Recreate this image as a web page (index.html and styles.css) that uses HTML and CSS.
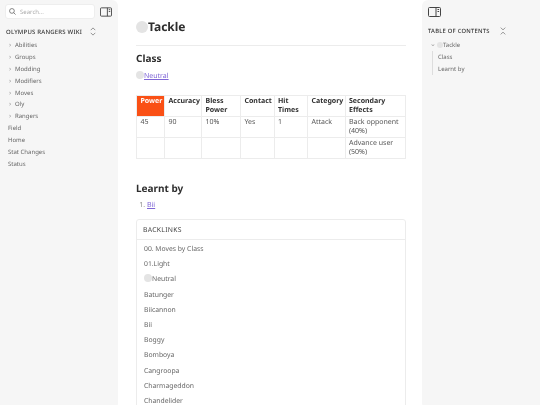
FILE: index.html
```html
<!DOCTYPE html>
<html lang="en">
<head>
<meta charset="utf-8">
<title>Tackle</title>
<link rel="stylesheet" href="styles.css">
</head>
<body>
<div class="layout">
  <aside class="left">
    <div class="search-row">
      <div class="search">
        <svg class="search-icon" viewBox="0 0 10 10" width="7" height="7"><circle cx="4.2" cy="4.2" r="3.4"/><path d="M6.6 6.6 9.4 9.4"/></svg>
        <span>Search...</span>
      </div>
      <svg class="panel-icon" viewBox="0 0 13 10" width="12" height="10"><rect x=".5" y=".5" width="12" height="9" rx="1"/><path d="M8 .5v9M9.5 2.5h1.6M9.5 4.5h1.6"/></svg>
    </div>
    <div class="wiki-row">
      <span class="wiki-title">OLYMPUS RANGERS WIKI</span>
      <svg class="updown" viewBox="0 0 8 12" width="6" height="9"><path d="M1 4.2 4 1.2 7 4.2M1 7.8 4 10.8 7 7.8"/></svg>
    </div>
    <nav class="tree">
      <div class="tree-item"><span class="chev">›</span>Abilities</div>
      <div class="tree-item"><span class="chev">›</span>Groups</div>
      <div class="tree-item"><span class="chev">›</span>Modding</div>
      <div class="tree-item"><span class="chev">›</span>Modifiers</div>
      <div class="tree-item"><span class="chev">›</span>Moves</div>
      <div class="tree-item"><span class="chev">›</span>Oly</div>
      <div class="tree-item"><span class="chev">›</span>Rangers</div>
      <div class="tree-leaf">Field</div>
      <div class="tree-leaf">Home</div>
      <div class="tree-leaf">Stat Changes</div>
      <div class="tree-leaf">Status</div>
    </nav>
  </aside>
  <main class="main">
    <h1 class="title"><span class="ball ball-lg"></span>Tackle</h1>
    <hr class="rule">
    <h2 class="heading">Class</h2>
    <p class="para"><a class="link" href="#"><span class="ball ball-sm"></span>Neutral</a></p>
    <table class="moves">
      <colgroup>
        <col class="c1"><col class="c2"><col class="c3"><col class="c4"><col class="c5"><col class="c6"><col>
      </colgroup>
      <thead>
        <tr><th class="hot">Power</th><th>Accuracy</th><th>Bless Power</th><th>Contact</th><th>Hit Times</th><th>Category</th><th>Secondary Effects</th></tr>
      </thead>
      <tbody>
        <tr><td>45</td><td>90</td><td>10%</td><td>Yes</td><td>1</td><td>Attack</td><td>Back opponent (40%)</td></tr>
        <tr><td></td><td></td><td></td><td></td><td></td><td></td><td>Advance user (50%)</td></tr>
      </tbody>
    </table>
    <h2 class="heading learnt">Learnt by</h2>
    <ol class="learnt-list"><li><a class="link" href="#">Bii</a></li></ol>
    <section class="backlinks">
      <div class="backlinks-head">BACKLINKS</div>
      <ul class="backlinks-list">
        <li>00. Moves by Class</li>
        <li>01.Light</li>
        <li><span class="ball ball-sm"></span>Neutral</li>
        <li>Batunger</li>
        <li>Biicannon</li>
        <li>Bii</li>
        <li>Boggy</li>
        <li>Bomboya</li>
        <li>Cangroopa</li>
        <li>Charmageddon</li>
        <li>Chandelider</li>
      </ul>
    </section>
  </main>
  <aside class="right">
    <svg class="panel-icon" viewBox="0 0 13 10" width="13" height="10"><rect x=".5" y=".5" width="12" height="9" rx="1"/><path d="M8 .5v9M9.5 2.5h1.6M9.5 4.5h1.6"/></svg>
    <div class="toc-row">
      <span class="toc-title">TABLE OF CONTENTS</span>
      <svg class="updown" viewBox="0 0 8 10" width="6" height="8"><path d="M1 .5 4 3.5 7 .5M1 9.5 4 6.5 7 9.5"/></svg>
    </div>
    <div class="toc-top"><span class="chev-down">⌄</span><span class="ball ball-xs"></span>Tackle</div>
    <div class="toc-sub">
      <div>Class</div>
      <div>Learnt by</div>
    </div>
  </aside>
</div>
</body>
</html>
```
FILE: styles.css
```css
* { box-sizing: border-box; }
html, body { margin: 0; height: 100%; }
html { text-rendering: geometricPrecision; }
body {
  font-family: "Noto Sans", sans-serif;
  color: #4a4a4a;
  background: #fff;
  overflow: hidden;
}
.layout {
  display: grid;
  grid-template-columns: 118px 1fr 118px;
  width: 540px;
  height: 405px;
  overflow: hidden;
  will-change: transform;
}
.left, .right { background: #f6f6f6; }
.left { padding: 4px 5px 0; border-radius: 0 6px 6px 0; }
.search-row { display: flex; align-items: center; justify-content: space-between; }
.search {
  width: 90px;
  height: 15px;
  background: #fff;
  border-radius: 3px;
  border: 1px solid #eee;
  display: flex;
  align-items: center;
  gap: 4px;
  padding-left: 3px;
  font-size: 6px;
  color: #aaa;
}
.search-icon { fill: none; stroke: #555; stroke-width: 1; }
.panel-icon { fill: none; stroke: #444; stroke-width: 1; display: block; }
.search-row .panel-icon { margin-right: 1px; }
.wiki-row { display: flex; align-items: center; margin: 7px 0 0 1px; height: 11px; }
.wiki-title { width: 76px; font-size: 6px; font-weight: 500; color: #333; letter-spacing: .2px; white-space: nowrap; }
.updown { fill: none; stroke: #666; stroke-width: .9; flex: none; }
.wiki-row .updown { margin-left: 8px; }
.tree { margin-top: 3px; font-size: 6px; color: #666; }
.tree-item, .tree-leaf { height: 11.9px; line-height: 11.9px; white-space: nowrap; }
.tree-leaf { padding-left: 3px; }
.tree-item { padding-left: 4px; }
.chev { display: inline-block; width: 6px; color: #999; font-size: 7px; }
.main { padding: 18px 16px 0 18px; min-width: 0; }
.title { margin: 0; font-size: 12px; line-height: 17px; font-weight: 700; color: #2e2e2e; display: flex; align-items: center; }
.ball { display: inline-block; border-radius: 50%; background: #e4e4e4; vertical-align: -1px; flex: none; }
.ball-lg { width: 12px; height: 12px; }
.ball-sm { width: 8px; height: 8px; }
.ball-xs { width: 6px; height: 6px; }
.rule { border: 0; border-top: 1px solid #ececec; margin: 10px 0 0; }
.heading { margin: 5px 0 0; font-size: 10px; line-height: 15px; font-weight: 700; color: #2e2e2e; }
.para { margin: 5px 0 0; font-size: 7px; line-height: 11px; }
.link { color: #7f66d6; text-decoration: underline; }
.moves { border-collapse: collapse; width: 270px; margin-top: 13px; table-layout: fixed; font-size: 7px; line-height: 8.5px; }
.moves th, .moves td { border: 1px solid #ececec; padding: 2px 3px 1px 3.5px; text-align: left; vertical-align: top; }
.moves th { font-weight: 700; color: #2e2e2e; height: 21px; }
.moves td { height: 21px; color: #555; }
.moves .hot { background: #fa5015; color: #fff; }
.c1 { width: 28px; } .c2 { width: 37px; } .c3 { width: 39px; } .c4 { width: 33.5px; } .c5 { width: 33.5px; } .c6 { width: 37.5px; }
.heading.learnt { margin-top: 22px; }
.learnt-list { margin: 4px 0 0; padding: 0 0 0 11px; font-size: 7px; line-height: 11px; color: #888; }
.backlinks { margin-top: 8px; border: 1px solid #ececec; border-radius: 3px; }
.backlinks-head { height: 20px; line-height: 19px; padding-left: 6px; font-size: 6.8px; letter-spacing: .3px; color: #444; border-bottom: 1px solid #ececec; }
.backlinks-list { list-style: none; margin: 0; padding: 1px 0 0 7px; font-size: 6.8px; color: #666; }
.backlinks-list li { height: 15.2px; line-height: 15.2px; }
.right { padding: 7px 5px 0 6px; border-radius: 6px 0 0 6px; }
.toc-row { display: flex; align-items: center; margin-top: 8px; height: 11px; }
.toc-title { width: 65px; font-size: 5.8px; font-weight: 500; color: #333; letter-spacing: .25px; white-space: nowrap; }
.toc-row .updown { margin-left: 7px; }
.toc-top { margin-top: 3px; font-size: 6px; color: #666; line-height: 12px; padding-left: 2px; display: flex; align-items: center; }
.chev-down { width: 7px; color: #999; font-size: 7px; line-height: 8px; }
.toc-sub { margin-left: 4px; padding-left: 5px; border-left: 1px solid #ddd; font-size: 6px; color: #666; }
.toc-sub div { line-height: 12px; }
```
